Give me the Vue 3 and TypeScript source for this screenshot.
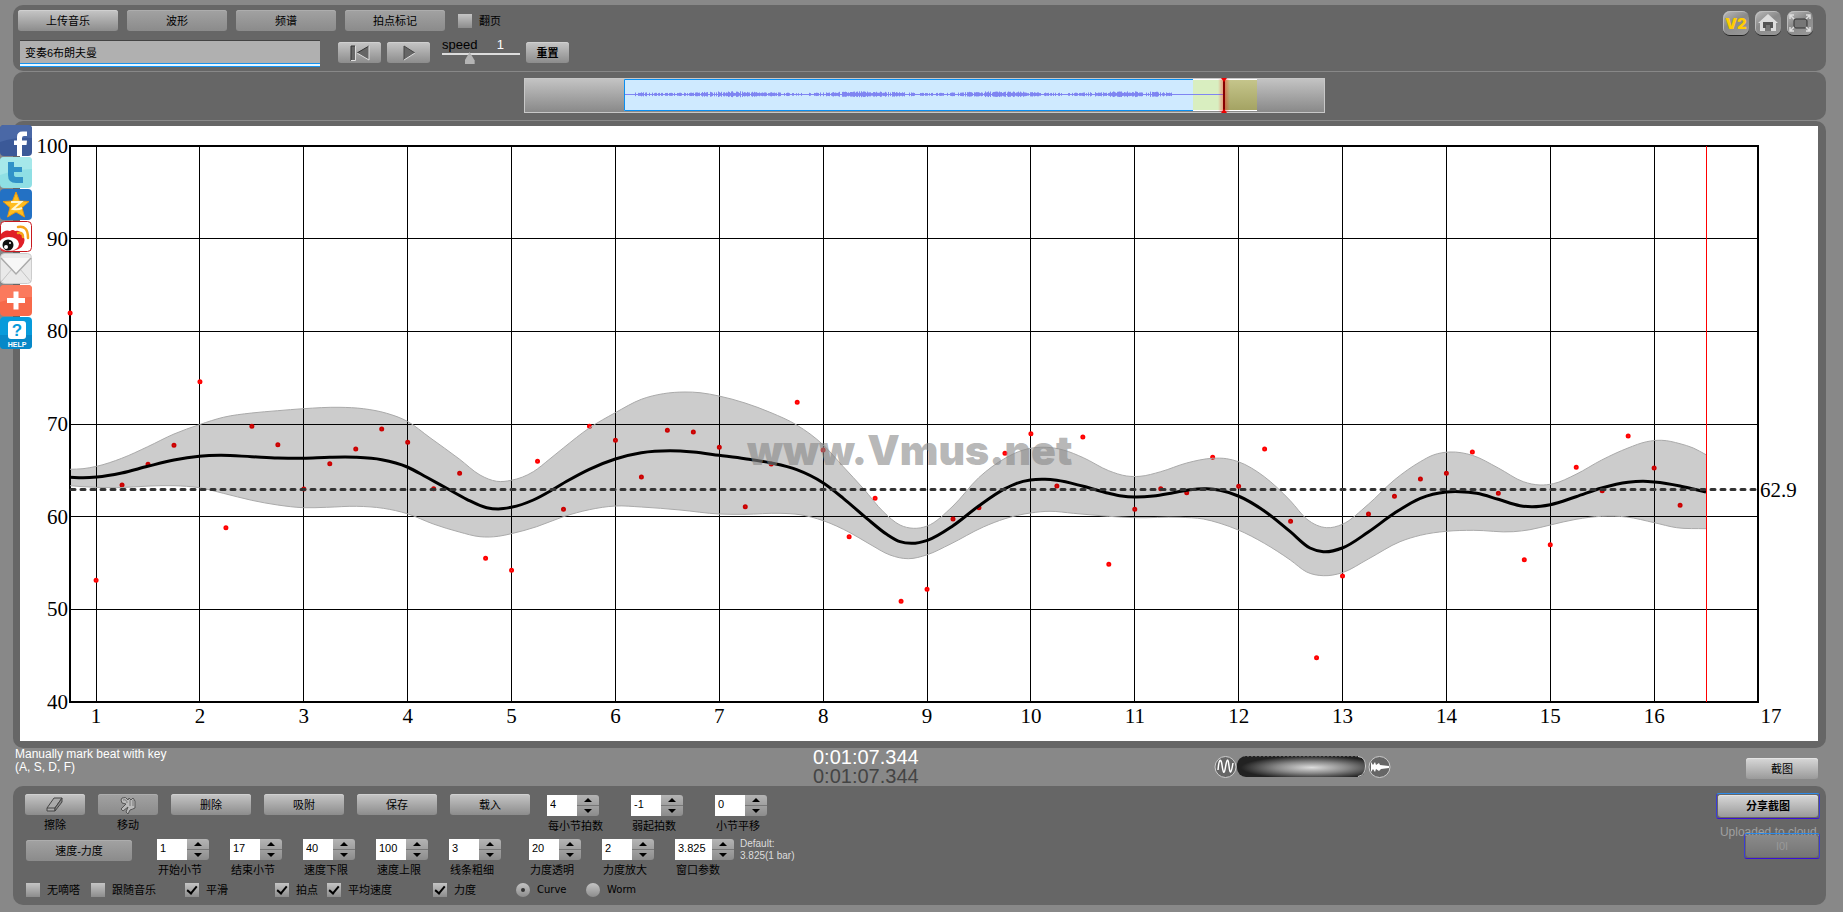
<script setup lang="ts">
import { ref } from 'vue'

type Point = [number, number]

const TOP = 146
const BOTTOM = 702
const LEFT = 70
const RIGHT = 1758

const xAt = (bar: number): number => RIGHT - (17 - bar) * 103.87
const yAt = (bpm: number): number => BOTTOM - ((bpm - 40) * (BOTTOM - TOP)) / 60

const bars = Array.from({ length: 17 }, (_, i) => i + 1)
const tempos = [40, 50, 60, 70, 80, 90, 100]

// One beat per quarter bar, starting at bar 0.75; values are canvas heights.
const beats: number[] = [
  313, 580.3, 485, 464.3, 445.3, 381.7, 527.7, 426.3, 444.7, 489, 463.7, 449, 429, 442.3, 488.7, 473.3,
  558.3, 570.3, 461.3, 509.3, 426.3, 440.3, 477, 430.3, 432, 447.3, 506.7, 464, 402.3, 450, 536.7, 498.3,
  601.3, 589.3, 519, 507.7, 453.3, 433.7, 486, 437, 564.3, 509.3, 488.7, 492.7, 457.3, 486.3, 449, 521.3,
  657.7, 576, 514, 496.3, 479, 473.3, 452, 493.3, 559.7, 544.7, 467.3, 490.7, 436, 468, 505.3,
]

const tempoCurve: Point[] = [
  [70, 477.3], [83, 477.7], [96.7, 477], [121.7, 473], [147.7, 466.3], [174, 460], [199.3, 456.3], [220, 455.3],
  [251.7, 456.7], [277.7, 458], [303.3, 458.3], [329.7, 457.3], [355.7, 457.3], [381.7, 459.7], [407.3, 467],
  [426.7, 477.3], [446.7, 488.3], [466.7, 499.3], [486.7, 507.7], [498.3, 509], [511.3, 507.3], [533.3, 500],
  [553.3, 489.3], [566.7, 481.3], [589.3, 469.3], [615.3, 459], [641.3, 452.7], [670, 450.7], [693.3, 452],
  [719, 455.3], [745, 458.7], [771, 463], [796.7, 469.7], [823.3, 483], [843.3, 498.3], [866.7, 518.3],
  [886.7, 534.3], [900, 541.7], [911.7, 543.3], [927.3, 540.3], [953, 525.7], [978.7, 506], [1005, 488.7],
  [1016.7, 483.3], [1030.3, 480], [1045, 479.3], [1056.7, 480.3], [1083.3, 486.3], [1108.7, 493.3], [1121.7, 496],
  [1134.7, 497], [1153.3, 496], [1173.3, 492.7], [1190, 489.7], [1206.7, 488.7], [1220, 490.3], [1238.3, 496],
  [1264.3, 511], [1290.3, 531.7], [1310, 548], [1323.3, 551.7], [1342.3, 548], [1368.3, 532], [1394.3, 513.3],
  [1420.3, 498.3], [1446.3, 492], [1460, 491.7], [1476.7, 493.3], [1498.3, 499.3], [1520, 505.7], [1531.7, 506.7],
  [1550.3, 504.7], [1576, 496.7], [1601.7, 488], [1628, 482.3], [1643.3, 481.3], [1654.3, 482], [1680, 486],
  [1693.3, 489], [1706, 492],
]

const bandTop: Point[] = [
  [70, 469.3], [83, 468.7], [96.7, 466.3], [121.7, 458.3], [147.7, 446.7], [174, 434], [199.3, 424.7],
  [223.3, 417.3], [251.7, 413], [277.7, 410.7], [303.3, 408.7], [340, 407.3], [363.3, 408.7], [386.7, 413.3],
  [407.3, 421.3], [430, 437.7], [459.3, 459], [480, 475], [496.7, 481.3], [511.3, 480.3], [533.3, 471.7],
  [550, 458.8], [563.3, 448], [589.3, 428], [615.3, 412.7], [641.3, 399.3], [663.3, 393.7], [685, 392],
  [700, 392.7], [719, 396], [745, 403], [771, 412.7], [796.7, 425], [823.3, 445], [843.3, 466.7], [863.3, 488.5],
  [883.3, 511.7], [900, 525], [913.3, 528.3], [927.3, 526], [953, 506], [978.7, 477.7], [1005, 458.3],
  [1023.3, 450], [1046.7, 447.3], [1063.3, 450], [1083.3, 457.7], [1108.7, 470.7], [1126.7, 476], [1140, 476.3],
  [1160.7, 471.7], [1186.7, 463], [1212.7, 458.3], [1226.7, 458.7], [1238.3, 461.7], [1264.3, 476.7],
  [1290.3, 500.7], [1306.7, 519], [1326.7, 527.7], [1342.3, 524.3], [1368.3, 504.3], [1394.3, 480],
  [1420.3, 461.7], [1433.3, 455], [1450, 452], [1472.3, 455.3], [1498.3, 468], [1523.3, 481.7], [1540, 485],
  [1553.3, 483.7], [1576, 474.3], [1601.7, 460], [1628, 448], [1646.7, 441.7], [1661.7, 440.3], [1680, 443.7],
  [1693.3, 448], [1706, 454.7],
]

const bandBottom: Point[] = [
  [70, 485.7], [83, 486.7], [116.7, 487.7], [150, 486], [174, 485.7], [199.3, 487.7], [223.3, 493.3],
  [251.7, 500.3], [277.7, 505], [303.3, 507.7], [326.7, 507.3], [356.7, 506.3], [383.3, 508.3], [407.3, 513.7],
  [433.3, 524], [459.3, 532], [480, 536.7], [498.3, 536.3], [511.3, 533.7], [536.7, 526.7], [563.3, 516.7],
  [589.3, 509.7], [615.3, 506], [641.3, 507], [680, 510], [719, 514], [745, 514.3], [780, 513.3], [800, 514.7],
  [823.3, 520.7], [850, 532.7], [870, 544.3], [890, 555], [908.3, 558.7], [927.3, 554.7], [950, 544.3],
  [983.3, 527], [1005, 518.7], [1030.3, 513], [1050, 511.3], [1073.3, 513.3], [1108.7, 516.3], [1134.7, 517.7],
  [1180, 517.3], [1203.3, 519], [1220, 523.3], [1238.3, 530], [1264.3, 543.3], [1290.3, 560], [1306.7, 572],
  [1323.3, 575.7], [1342.3, 572.7], [1368.3, 559], [1400, 541.7], [1420.3, 535.3], [1446.3, 531.3],
  [1473.3, 530.3], [1513.3, 531.7], [1530, 529.7], [1550.3, 525], [1576, 519.3], [1601.7, 516.3],
  [1626.7, 517], [1654.3, 522.7], [1676.7, 527.7], [1706, 528.7],
]

// Slope of the parabola through a point and its two neighbours.
function slope(pts: Point[], i: number): number {
  const j = Math.min(Math.max(i, 1), pts.length - 2)
  const h1 = pts[j][0] - pts[j - 1][0]
  const h2 = pts[j + 1][0] - pts[j][0]
  const d1 = (pts[j][1] - pts[j - 1][1]) / h1
  const d2 = (pts[j + 1][1] - pts[j][1]) / h2
  if (i < j) return d1
  if (i > j) return d2
  return (d1 * h2 + d2 * h1) / (h1 + h2)
}

function spline(pts: Point[], start = 'M'): string {
  let d = `${start}${pts[0][0]} ${pts[0][1]}`
  for (let i = 0; i < pts.length - 1; i++) {
    const b = pts[i]
    const c = pts[i + 1]
    const h = (c[0] - b[0]) / 3
    d += `C${b[0] + h} ${b[1] + slope(pts, i) * h} ${c[0] - h} ${c[1] - slope(pts, i + 1) * h} ${c[0]} ${c[1]}`
  }
  return d
}

const upperEdge = spline(bandTop)
const lowerEdge = spline(bandBottom)
const band = upperEdge + spline([...bandBottom].reverse(), 'L') + 'Z'
const curve = spline(tempoCurve)

// Small spikes around the centre line of the overview.
function wavePath(): string {
  let d = ''
  for (let x = 110; x < 648; x += 1) {
    const s = Math.sin(x * 12.9898) * 43758.5453
    const r = s - Math.floor(s)
    const swell = 0.5 + 0.5 * Math.cos((x - 210) / 21)
    const a = 0.4 + r * (0.8 + 1.6 * swell)
    if (a > 0.8) d += `M${x + 0.5} ${16 - a}V${17 + a * 0.8}`
  }
  return d
}

const wave = wavePath()

const title = ref('变奏6布朗夫曼')
const speed = ref(1)
const flip = ref(false)
const mode = ref('curve')

interface Spin { id: string; label: string; value: string; wide?: boolean; apart?: boolean }
const upperSpins = ref<Spin[]>([
  { id: 'beats', label: '每小节拍数', value: '4' },
  { id: 'pickup', label: '弱起拍数', value: '-1' },
  { id: 'shift', label: '小节平移', value: '0' },
])
const lowerSpins = ref<Spin[]>([
  { id: 'from', label: '开始小节', value: '1' },
  { id: 'to', label: '结束小节', value: '17' },
  { id: 'low', label: '速度下限', value: '40' },
  { id: 'high', label: '速度上限', value: '100' },
  { id: 'stroke', label: '线条粗细', value: '3' },
  { id: 'alpha', label: '力度透明', value: '20', apart: true },
  { id: 'gain', label: '力度放大', value: '2' },
  { id: 'window', label: '窗口参数', value: '3.825', wide: true },
])
const checks = ref([
  { label: '无嘀嗒', on: false },
  { label: '跟随音乐', on: false },
  { label: '平滑', on: true },
  { label: '拍点', on: true },
  { label: '平均速度', on: true },
  { label: '力度', on: true },
])

function step(s: Spin, by: number): void {
  s.value = String(Number(s.value) + by)
}
</script>

<template>
  <div class="app">
    <header class="panel toolbar">
      <div class="tools">
        <div class="row tabs">
          <button class="btn b100">上传音乐</button>
          <button class="btn dim b100">波形</button>
          <button class="btn dim b100">频谱</button>
          <button class="btn dim b100">拍点标记</button>
          <label class="check flip"><input v-model="flip" type="checkbox" />翻页</label>
        </div>
        <div class="row player">
          <input v-model="title" class="title" type="text" aria-label="曲名" />
          <button class="btn b43" aria-label="回到开头">
            <svg width="22" height="18" viewBox="0 0 22 18"><path d="M2 2H6V16H2Z" fill="#666" /><path d="M2 17V2H6" fill="none" stroke="#333" /><path d="M6.500 2V16.500H2" fill="none" stroke="#ddd" /><path d="M20 2V16L8 9Z" fill="#666" /><path d="M20 2L8 9" stroke="#333" /><path d="M8 9L20 16V2" fill="none" stroke="#ddd" /></svg>
          </button>
          <button class="btn b43" aria-label="播放">
            <svg width="18" height="18" viewBox="0 0 18 18"><path d="M4 2L15 9L4 16Z" fill="#666" /><path d="M4 16V2L15 9" fill="none" stroke="#444" /><path d="M15 9L4 16" stroke="#ddd" /></svg>
          </button>
          <div class="speed">
            <div class="speed-text"><label for="speed">speed</label><output for="speed">{{ speed }}</output></div>
            <input id="speed" v-model="speed" type="range" min="0" max="3" />
          </div>
          <button class="btn strong b43">重置</button>
        </div>
      </div>
      <nav class="corner">
        <button class="tile v2">V2</button>
        <button class="tile" aria-label="主页">
          <svg width="26" height="24" viewBox="0 0 26 24"><path d="M3 12L13 3L23 12H21V20H5V12Z" fill="#ddd" /><path d="M10 20V13H16V20Z" fill="#777" /><path d="M8 11H18V17H15V14H11V17H8Z" fill="#555" /></svg>
        </button>
        <button class="tile" aria-label="全屏">
          <svg width="26" height="24" viewBox="0 0 26 24"><rect x="7" y="8" width="13" height="9" rx="2" fill="#777" stroke="#333" /><path d="M3 8V4H7M3 4L7 8M19 4H23V8M23 4L19 8M3 16V20H7M3 20L7 16M19 20H23V16M23 20L19 16" fill="none" stroke="#ddd" stroke-width="1.5" /></svg>
        </button>
      </nav>
    </header>

    <section class="panel overview">
      <svg width="801" height="35" viewBox="0 0 801 35">
        <defs>
          <linearGradient id="track" x1="0" y1="0" x2="0" y2="1"><stop offset="0" stop-color="#c4c4c4" /><stop offset="1" stop-color="#888" /></linearGradient>
          <linearGradient id="olive" x1="0" y1="0" x2="0" y2="1"><stop offset="0" stop-color="#c6c68c" /><stop offset="1" stop-color="#a3a262" /></linearGradient>
          <linearGradient id="glow"><stop offset="0" stop-color="#f00" stop-opacity="0" /><stop offset=".5" stop-color="#f00" stop-opacity=".4" /><stop offset="1" stop-color="#f00" stop-opacity="0" /></linearGradient>
        </defs>
        <rect x=".5" y=".5" width="800" height="34" fill="url(#track)" stroke="#c8c8c8" />
        <rect x="100" y="1" width="569" height="32" fill="#cfeaff" />
        <path d="M669 1.500H100.500V32.500H669" fill="none" stroke="#0a8ef0" />
        <rect x="669" y="1" width="31" height="32" fill="#d9eec0" />
        <rect x="700" y="1" width="33" height="32" fill="url(#olive)" />
        <path d="M669 1.500H733M669 32.500H733" stroke="#fff" />
        <path d="M101 16.500H700" stroke="#7f85f2" />
        <path :d="wave" stroke="#7f85f2" />
        <rect x="694" y="1" width="12" height="33" fill="url(#glow)" />
        <path d="M700 1V34" stroke="#800" stroke-width="2" />
        <path d="M697 0H703L700 4ZM697 35H703L700 31Z" fill="#e00" />
      </svg>
    </section>

    <main class="panel stage">
      <svg class="chart" viewBox="20 126 1798 615" role="img" aria-label="速度-力度">
        <g shape-rendering="crispEdges" stroke="#000">
          <line v-for="b in bars" :key="b" :x1="xAt(b)" :x2="xAt(b)" :y1="TOP" :y2="BOTTOM" />
          <line v-for="t in tempos" :key="t" :x1="LEFT" :x2="RIGHT" :y1="yAt(t)" :y2="yAt(t)" />
        </g>
        <rect :x="LEFT" :y="TOP" :width="RIGHT - LEFT" :height="BOTTOM - TOP" fill="none" stroke="#000" stroke-width="2" />
        <circle v-for="(y, i) in beats" :key="i" :cx="xAt(0.75 + i / 4)" :cy="y" r="1.5" fill="#f44" stroke="#f00" stroke-width="2" />
        <path :d="band" fill="#000" fill-opacity=".2" />
        <path :d="upperEdge" class="edge" />
        <path :d="lowerEdge" class="edge" />
        <path :d="curve" fill="none" stroke="#000" stroke-width="3" />
        <path d="M71 489.500H1758" stroke="#333" stroke-width="3" stroke-dasharray="4 6" stroke-linecap="round" />
        <path d="M1706.500 146V702" stroke="#f00" />
        <text x="747" y="465" class="mark">www.Vmus.net</text>
        <g class="scale">
          <text v-for="t in tempos" :key="t" x="68" :y="yAt(t) + 7" text-anchor="end">{{ t }}</text>
          <text v-for="b in bars" :key="b" :x="xAt(b) + (b === 17 ? 13 : 0)" y="723" text-anchor="middle">{{ b }}</text>
          <text x="1760" y="497">62.9</text>
        </g>
      </svg>
    </main>

    <section class="status">
      <p class="hint">Manually mark beat with key<br />(A, S, D, F)</p>
      <div class="clock"><span>0:01:07.344</span><span class="total">0:01:07.344</span></div>
      <div class="zoomer">
        <svg width="177" height="24" viewBox="0 0 177 24">
          <defs>
            <radialGradient id="wheel" cx=".58" cy=".55" r=".55"><stop offset="0" stop-color="#ddd" /><stop offset=".5" stop-color="#888" /><stop offset="1" stop-color="#222" /></radialGradient>
          </defs>
          <circle cx="11.5" cy="12" r="10.5" fill="#666" stroke="#ccc" />
          <path d="M4 15C5 3 7 3 8 10S10 21 11.500 12S14 3 15 11S17 20 19 8" fill="none" stroke="#fff" stroke-width="1.5" />
          <rect x="23" y="1" width="129" height="21" rx="9" fill="url(#wheel)" />
          <path d="M29 1.500H146" stroke="#555" stroke-dasharray="2 2" />
          <path d="M144 1.500Q151.500 2 151.500 11T144 21.500" fill="none" stroke="#ccc" />
          <circle cx="165.500" cy="12" r="10.500" fill="#666" stroke="#ccc" />
          <path d="M157 7L159 10L161 7L162 10L165 8L166 10L175 11V13L167 14L165 16L162 14L161 17L159 14L157 17Z" fill="#fff" />
        </svg>
      </div>
      <button class="btn bright b72">截图</button>
    </section>

    <footer class="panel controls">
      <div class="grid">
        <div class="row first">
          <div class="cell">
            <button id="erase" class="btn b60" aria-label="擦除">
              <svg width="20" height="18" viewBox="0 0 20 18"><path d="M2 12L9 2H17L10 12V15H2Z" fill="#aaa" stroke="#444" stroke-linejoin="round" /><path d="M2 12H10L17 2V6L10 15V12" fill="#888" stroke="#444" /></svg>
            </button>
            <label for="erase">擦除</label>
          </div>
          <div class="cell">
            <button id="move" class="btn dim b60" aria-label="移动">
              <svg width="20" height="20" viewBox="0 0 20 20"><path d="M4 3Q8 1 10 5L11 3L13 5L15 3L17 6V13Q15 14 12 15L10 19L8 17L10 12L5 16L3 14L8 9L4 8L3 5Z" fill="#bbb" stroke="#555" /><path d="M5 5Q9 4 9 8M12 5V11M15 5V11" fill="none" stroke="#777" /></svg>
            </button>
            <label for="move">移动</label>
          </div>
          <button class="btn b80">删除</button>
          <button class="btn b80">吸附</button>
          <button class="btn b80">保存</button>
          <button class="btn b80">载入</button>
          <div class="spins upper">
            <div v-for="s in upperSpins" :key="s.id" class="cell start">
              <div class="spin">
                <input :id="s.id" v-model="s.value" type="text" />
                <div class="arrows"><button aria-label="增加" @click="step(s, 1)"></button><button aria-label="减少" @click="step(s, -1)"></button></div>
              </div>
              <label :for="s.id">{{ s.label }}</label>
            </div>
          </div>
        </div>
        <div class="row second">
          <button class="btn dim b106">速度-力度</button>
          <div class="spins lower">
            <div v-for="s in lowerSpins" :key="s.id" class="cell start" :class="{ apart: s.apart }">
              <div class="spin" :class="{ wide: s.wide }">
                <input :id="s.id" v-model="s.value" type="text" />
                <div class="arrows"><button aria-label="增加" @click="step(s, 1)"></button><button aria-label="减少" @click="step(s, -1)"></button></div>
              </div>
              <label :for="s.id">{{ s.label }}</label>
            </div>
          </div>
          <p class="default">Default:<br />3.825(1 bar)</p>
        </div>
        <div class="options">
          <label v-for="c in checks" :key="c.label" class="check"><input v-model="c.on" type="checkbox" />{{ c.label }}</label>
          <label class="check latin"><input v-model="mode" type="radio" value="curve" />Curve</label>
          <label class="check latin"><input v-model="mode" type="radio" value="worm" />Worm</label>
        </div>
      </div>
      <div class="share">
        <div class="ring"><button class="btn bright strong b100">分享截图</button></div>
        <span class="uploaded">Uploaded to cloud.</span>
        <div class="ring faded"><button class="btn b72" disabled>I0I</button></div>
      </div>
    </footer>

    <aside class="social">
      <a href="#" aria-label="Facebook">
        <svg viewBox="0 0 32 32"><rect width="32" height="31" rx="4" fill="#3b5998" /><path d="M0 4Q0 0 4 0H28Q32 0 32 4V13Q16 12 0 17Z" fill="#4a68a6" /><path d="M17 31V20H14V15.500H17V12Q17 6.500 22.500 6.500H27V11H24Q22 11 22 13V15.500H27L26.500 20H22V31Z" fill="#fff" /></svg>
      </a>
      <a href="#" aria-label="Twitter">
        <svg viewBox="0 0 32 32"><rect width="32" height="31" rx="4" fill="#8fdfe4" /><path d="M0 4Q0 0 4 0H28Q32 0 32 4V12Q16 12 0 18Z" fill="#a6e8ea" /><path d="M8 5H14V10H22V15H14V18Q14 20 17 20H23V26H16Q8 26 8 18Z" fill="#3192c8" /></svg>
      </a>
      <a href="#" aria-label="QQ空间">
        <svg viewBox="0 0 32 32"><rect width="32" height="31" rx="4" fill="#2371c4" /><path d="M16 3L19.500 12L29 12.500L22 18.500L24.500 28L16 23L7.500 28L10 18.500L3 12.500L12.500 12Z" fill="#ffbd1f" stroke="#e89812" /><path d="M11 13H21L13 20Q18 21 22 19" fill="none" stroke="#fff6d0" stroke-width="2" /></svg>
      </a>
      <a href="#" aria-label="微博">
        <svg viewBox="0 0 32 32"><rect x=".5" y=".5" width="31" height="30" rx="4" fill="#fff" stroke="#c8191e" /><path d="M1 13Q5 8 10 10Q13 8 15 10Q21 9 20 13Q26 15 24 22Q21 30 9 30H4Q1 30 1 27Z" fill="#e01f27" /><ellipse cx="9" cy="23" rx="10" ry="7" fill="#fff" /><circle cx="8" cy="24" r="5.500" fill="#111" /><circle cx="6" cy="26" r="2" fill="#fff" /><circle cx="10" cy="22" r="1" fill="#fff" /><path d="M18 6Q28 4 28 17M18 12Q23 11 23 16" fill="none" stroke="#f5a31c" stroke-width="2.500" stroke-linecap="round" /></svg>
      </a>
      <a href="#" aria-label="邮件">
        <svg viewBox="0 0 32 32"><rect x=".5" y=".5" width="31" height="30" rx="4" fill="#e9e9e9" stroke="#ccc" /><path d="M1 29L12 16M31 29L20 16" stroke="#c4c4c4" /><path d="M1 5L16 21L31 5" fill="#f7f7f7" stroke="#aaa" stroke-width="1.500" /></svg>
      </a>
      <a href="#" aria-label="更多">
        <svg viewBox="0 0 32 32"><rect width="32" height="31" rx="4" fill="#f7694a" /><path d="M0 4Q0 0 4 0H28Q32 0 32 4V12Q16 12 0 17Z" fill="#fb7a5d" /><path d="M13.500 6.500H18.500V13H25V18H18.500V24.500H13.500V18H7V13H13.500Z" fill="#fff" /></svg>
      </a>
      <a href="#" aria-label="Help">
        <svg viewBox="0 0 32 32"><rect width="32" height="32" rx="4" fill="#079bdb" /><path d="M0 18H32V28Q32 32 28 32H4Q0 32 0 28Z" fill="#0788c8" /><rect x="8" y="4" width="18" height="18" rx="3" fill="#fff" /><text x="17" y="19" class="q">?</text><text x="17" y="30" class="help">HELP</text></svg>
      </a>
    </aside>
  </div>
</template>

<style>
body {
  margin: 0;
  background: #888;
}
</style>

<style scoped>
.app {
  position: relative;
  padding: 5px 17px 7px 13px;
  font: 11px/14px "Liberation Sans", "Noto Sans CJK SC", sans-serif;
  color: #000;
}
button, input {
  box-sizing: border-box;
  margin: 0;
  font: inherit;
  color: inherit;
}
p { margin: 0; }
.panel {
  background: #666;
  border-radius: 10px;
  box-sizing: border-box;
}
.row { display: flex; }
.btn {
  flex: none;
  display: flex;
  align-items: center;
  justify-content: center;
  height: 21px;
  padding: 0;
  border: 0;
  border-radius: 3px;
  background: linear-gradient(#c6c6c6, #8c8c8c);
  box-shadow: inset 0 1px #d0d0d0;
}
.btn.dim {
  background: linear-gradient(#a2a2a2, #8b8b8b);
  box-shadow: inset 0 1px #adadad;
}
.btn.bright {
  background: linear-gradient(#d8d8d8, #9a9a9a);
  box-shadow: inset 0 1px #e4e4e4;
}
.strong { font-weight: bold; }
.b43 { width: 43px; }
.b60 { width: 60px; }
.b72 { width: 72px; }
.b80 { width: 80px; }
.b100 { width: 100px; }
.b106 { width: 106px; }

.toolbar {
  display: flex;
  justify-content: space-between;
  height: 66px;
  padding: 5px 13px 0 5px;
}
.tabs { gap: 9px; }
.flip { margin-left: 4px; }
.check {
  display: flex;
  align-items: center;
  gap: 7px;
  white-space: nowrap;
}
.check input {
  appearance: none;
  flex: none;
  display: grid;
  place-items: center;
  width: 14px;
  height: 14px;
  background: linear-gradient(#c4c4c4, #8c8c8c);
}
.check input[type="checkbox"]:checked::after {
  content: "";
  width: 4px;
  height: 8px;
  margin-bottom: 3px;
  border: solid #000;
  border-width: 0 2px 2px 0;
  transform: rotate(40deg);
}
.check input[type="radio"] { border-radius: 50%; }
.check input[type="radio"]:checked::after {
  content: "";
  width: 4px;
  height: 4px;
  border-radius: 50%;
  background: #333;
}
.player {
  margin-top: 9px;
  padding-left: 2px;
}
.player .btn { margin-top: 2px; }
.title {
  width: 300px;
  height: 27px;
  margin-right: 18px;
  padding: 0 5px 4px;
  border: 0;
  border-top: 1px solid #444;
  border-bottom: 1px solid #1593f0;
  background: linear-gradient(#1593f0, #1593f0) 0 22px / 100% 1px no-repeat,
    linear-gradient(#e8f6ff, #e8f6ff) 0 23px / 100% 2px no-repeat, #b0b0b0;
  outline: 0;
}
.player .btn + .btn { margin-left: 6px; }
.speed {
  width: 78px;
  margin: 0 6px 0 12px;
}
.speed-text {
  display: flex;
  justify-content: space-between;
  padding-right: 16px;
  font-size: 13px;
  line-height: 13px;
  height: 13px;
  margin-top: -2px;
}
.speed-text output { color: #fff; }
.speed input {
  appearance: none;
  display: block;
  width: 78px;
  height: 12px;
  margin-top: 1px;
  background: linear-gradient(#ddd, #ddd) 0 1px / 100% 2px no-repeat;
}
.speed input::-webkit-slider-thumb {
  appearance: none;
  width: 10px;
  height: 12px;
  background: #b4b4b4;
  clip-path: polygon(50% 0, 100% 70%, 100% 100%, 0 100%, 0 70%);
}
.corner {
  display: flex;
  gap: 6px;
  padding-top: 1px;
}
.tile {
  display: grid;
  place-items: center;
  width: 26px;
  height: 24px;
  padding: 0;
  border: 0;
  border-radius: 7px;
  background: linear-gradient(150deg, #bbb, #8a8a8a 45%, #999);
  box-shadow: 0 1px #222, inset 1px 1px #bbb;
}
.v2 {
  color: #fc0;
  font: 900 15px Inter, sans-serif;
}
.overview {
  display: flex;
  justify-content: center;
  height: 48px;
  margin-top: 1px;
  padding: 6px 0 0 9px;
}
.stage {
  margin-top: 1px;
  padding: 5px 8px 7px 7px;
}
.chart {
  display: block;
  width: 100%;
  background: #fff;
}
.edge {
  fill: none;
  stroke: #aaa;
}
.mark {
  font: 900 41px Inter, sans-serif;
  fill: #888;
  fill-opacity: .62;
}
.scale { font: 21px "Liberation Serif", serif; }

.status {
  display: grid;
  grid-template-columns: 800px 401px 1fr auto;
  height: 38px;
  padding-right: 8px;
}
.hint {
  padding: 0 2px;
  color: #fff;
  font-size: 12px;
  line-height: 13px;
}
.clock {
  display: flex;
  flex-direction: column;
  color: #fff;
  font-size: 20px;
  line-height: 19px;
}
.total { color: #444; }
.zoomer { padding-top: 7px; }
.status .btn { margin-top: 10px; }

.controls {
  display: flex;
  justify-content: space-between;
  height: 119px;
  padding: 8px 6px 0 12px;
}
.first { gap: 13px; height: 44px; }
.second { height: 44px; padding-left: 1px; }
.second > .btn { margin-top: 2px; }
.cell {
  display: flex;
  flex-direction: column;
  align-items: center;
  gap: 3px;
  white-space: nowrap;
}
.start { align-items: flex-start; }
.start label { padding-left: 1px; }
.spins { display: flex; }
.upper { gap: 32px; margin-left: 4px; padding-top: 1px; }
.lower { gap: 21px; margin-left: 25px; padding-top: 1px; }
.upper .cell { width: 52px; }
.apart { margin-left: 7px; }
.spin {
  display: flex;
  width: 52px;
  height: 21px;
}
.wide { width: 59px; }
.spin input {
  flex: 1;
  min-width: 0;
  padding: 0 3px 3px;
  border: 0;
  border-radius: 0;
  background: #fff;
}
.arrows { width: 22px; }
.arrows button {
  display: grid;
  place-items: center;
  width: 22px;
  height: 11px;
  padding: 0;
  border: 0;
  border-bottom: 1px solid #777;
  border-radius: 0 3px 0 0;
  background: linear-gradient(#b4b4b4, #a0a0a0);
}
.arrows button + button {
  height: 10px;
  border-bottom: 0;
  border-radius: 0 0 3px 0;
  background: linear-gradient(#a0a0a0, #8c8c8c);
}
.arrows button::after {
  content: "";
  border: 4px solid transparent;
  border-top-width: 0;
  border-bottom-color: #000;
}
.arrows button + button::after {
  border-width: 4px 4px 0;
  border-top-color: #000;
}
.default {
  margin-left: 6px;
  color: #ddd;
  font-size: 10px;
  line-height: 12px;
}
.options {
  display: grid;
  grid-template-columns: 65px 94px 90px 52px 106px 83px 70px auto;
  padding: 1px 0 0 1px;
}
.latin { font: 10px/14px "DejaVu Sans", sans-serif; }
.share {
  display: flex;
  flex-direction: column;
  align-items: flex-end;
  margin-top: -1px;
}
.ring {
  padding: 1px;
  border: 1px solid;
  border-color: #2d8bea #3a3bd8 #3a10d8;
  border-radius: 3px;
}
.ring .btn { height: 22px; }
.uploaded {
  margin-top: 6px;
  color: #a0a0a0;
  font-size: 12px;
}
.faded { margin-top: -6px; }
.faded .btn {
  background: linear-gradient(#8a8a8a, #757575);
  box-shadow: none;
  color: #999;
}
.social {
  position: absolute;
  left: 0;
  top: 125px;
  display: flex;
  flex-direction: column;
  width: 32px;
}
.social a, .social svg {
  display: block;
  width: 32px;
  height: 32px;
}
.q {
  font: bold 17px "Liberation Sans", sans-serif;
  fill: #079bdb;
  text-anchor: middle;
}
.help {
  font: bold 7px "Liberation Sans", sans-serif;
  fill: #fff;
  text-anchor: middle;
}
</style>
